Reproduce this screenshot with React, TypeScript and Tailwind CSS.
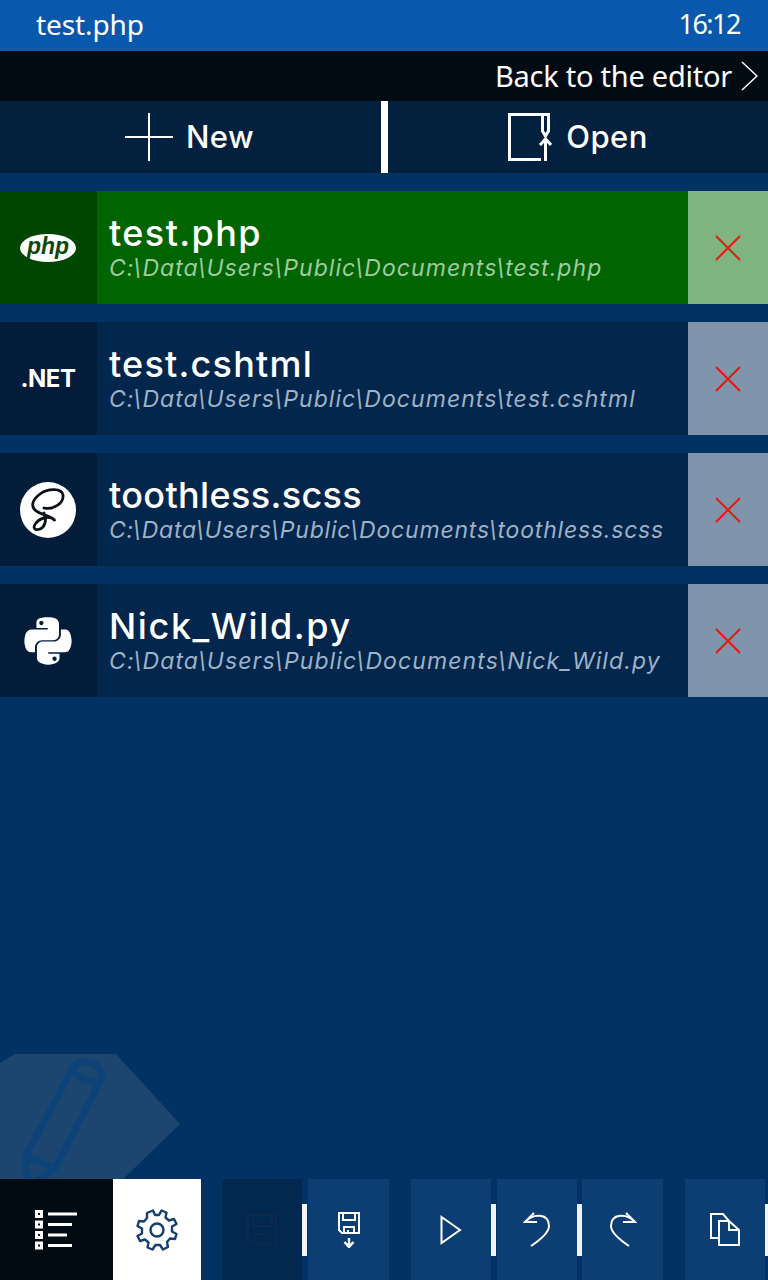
import React from "react";
import { FaPython } from "react-icons/fa";

const X = () => (
  <svg width="28" height="28" viewBox="0 0 28 28" fill="none" stroke="#e8170f" strokeWidth="2">
    <path d="M2 2 L26 26 M26 2 L2 26" />
  </svg>
);

const Php = () => (
  <svg width="56" height="30" viewBox="0 0 56 30">
    <ellipse cx="28" cy="15" rx="28" ry="14" fill="#fff" />
    <text x="28" y="21" textAnchor="middle" fontFamily="'Liberation Sans', sans-serif" fontStyle="italic" fontWeight="700" fontSize="23" textLength="42" lengthAdjust="spacingAndGlyphs" fill="#0c4708">php</text>
  </svg>
);

const Sass = () => (
  <div className="w-[56px] h-[56px] rounded-full bg-white flex items-center justify-center">
    <svg width="56" height="56" viewBox="0 0 56 56" fill="none" stroke="#0a0f18" strokeLinecap="round">
      <path d="M24 26 C32 28 44 22 43 13 C42 6 28 6 20 12 C12 18 11 24 15 28 C20 33 33 34 35 39 C32 34 22 34 16 41 C12 46 15 49 20 47 C25 45 27 38 24 31" strokeWidth="2.800" />
    </svg>
  </div>
);

type FileRow = { name: string; path: string; icon: React.ReactNode; track: string; pathTrack: string; active?: boolean };

const files: FileRow[] = [
  { name: "test.php", track: "tracking-[1.4px]", pathTrack: "tracking-[1.050px]", path: "C:\\Data\\Users\\Public\\Documents\\test.php", icon: <Php />, active: true },
  { name: "test.cshtml", track: "tracking-[1.2px]", pathTrack: "tracking-[1.050px]", path: "C:\\Data\\Users\\Public\\Documents\\test.cshtml", icon: <span className="text-white text-[24px] font-bold tracking-[-0.5px]">.NET</span> },
  { name: "toothless.scss", track: "tracking-[0.35px]", pathTrack: "tracking-[0.8px]", path: "C:\\Data\\Users\\Public\\Documents\\toothless.scss", icon: <Sass /> },
  { name: "Nick_Wild.py", track: "tracking-[1.6px]", pathTrack: "tracking-[1.100px]", path: "C:\\Data\\Users\\Public\\Documents\\Nick_Wild.py", icon: <FaPython className="text-white" size={54} /> },
];

const Sep = () => <div className="w-[5px] h-[52px] mt-[25px] bg-[#f1f4f8] shrink-0" />;

const Tool = ({ children, w = "w-[80px]", cls = "bg-[#0c3e73]" }: { children: React.ReactNode; w?: string; cls?: string }) => (
  <div className={`${w} ${cls} h-full shrink-0 flex items-center justify-center`}>{children}</div>
);

export default function App() {
  return (
    <div className="relative w-[768px] h-[1280px] overflow-hidden bg-[#023264] flex flex-col font-['Inter',sans-serif]">
      <div className="h-[51px] bg-[#0859ad] flex items-center justify-between pl-[36px] pr-[28px] pb-[3px] text-white font-normal font-['Noto_Sans',sans-serif] shrink-0">
        <span className="text-[28px] tracking-[-0.1px]">test.php</span>
        <span className="text-[27px] tracking-[-1.500px]">16:12</span>
      </div>
      <div className="h-[50px] bg-[#020a14] flex items-center justify-end pr-[10px] gap-[9px] text-white text-[29px] font-normal font-['Noto_Sans',sans-serif] shrink-0">
        <span className="tracking-[-0.25px]">Back to the editor</span>
        <svg width="17" height="30" viewBox="0 0 17 30" fill="none" stroke="#fff" strokeWidth="1.5"><path d="M1 1 L16 15 L1 29" /></svg>
      </div>
      <div className="h-[72px] bg-[#03203f] flex shrink-0 text-white text-[31px] font-medium">
        <div className="w-[381px] flex items-center justify-center gap-[13px] pr-[2px]">
          <svg width="48" height="48" viewBox="0 0 48 48" stroke="#fff" strokeWidth="2"><path d="M0 24 H48 M24 0 V48" /></svg>
          <span className="tracking-[0.4px]">New</span>
        </div>
        <div className="w-[7px] bg-white" />
        <div className="flex-1 flex items-center justify-center gap-[14px]">
          <svg width="44" height="48" viewBox="0 0 44 48" fill="none" stroke="#fff" strokeWidth="3">
            <path d="M33 46.500 H1.500 V1.500 H40.500 V18 L37.500 23 L34.500 18 V2" />
            <path d="M37.500 48 V27 M32 32 L37.500 26 L43 32" />
          </svg>
          <span className="tracking-[0.4px]">Open</span>
        </div>
      </div>
      <div className="flex-1 flex flex-col gap-[18px] pt-[18px] relative z-10">
        {files.map((f) => (
          <div key={f.name} className={`h-[113px] flex ${f.active ? "bg-[#006400]" : "bg-[#03264d]"}`}>
            <div className={`w-[97px] pr-px flex items-center justify-center shrink-0 ${f.active ? "bg-[#004500]" : "bg-[#031c3a]"}`}>{f.icon}</div>
            <div className="flex-1 pl-[12px] pt-[20px] min-w-0">
              <div className={`text-white text-[36px] leading-[45px] font-medium whitespace-nowrap ${f.track}`}>{f.name}</div>
              <div className={`text-[23px] leading-[24px] italic whitespace-nowrap ${f.pathTrack} ${f.active ? "text-[#9fcb9f]" : "text-[#9fb2c6]"}`}>{f.path}</div>
            </div>
            <div className={`w-[80px] flex items-center justify-center shrink-0 ${f.active ? "bg-[#80b480]" : "bg-[#8095ab]"}`}><X /></div>
          </div>
        ))}
      </div>
      <svg className="absolute left-0 top-[1050px]" width="184" height="130" viewBox="0 0 184 130">
        <path d="M0 13 L15 4 H116 L180 74 L122 130 H0 Z" fill="#1c4670" />
        <g fill="none" stroke="#0d4379" strokeWidth="7">
          <path d="M72 20 C78 6 102 10 102 28 L55 118 L30 136 C26 124 25 114 25 107 Z" />
          <path d="M72 20 C80 30 92 34 102 30" />
          <path d="M25 107 C34 110 46 114 55 118" />
        </g>
      </svg>
      <div className="h-[101px] flex shrink-0 relative z-10">
        <Tool w="w-[113px]" cls="bg-[#020a14]">
          <svg width="44" height="40" viewBox="0 0 44 40" fill="#fff">
            <path fillRule="evenodd" d="M0 0 H8 V8 H0 Z M3 3 V5 H5 V3 Z M0 10.500 H8 V18.500 H0 Z M3 13.500 V15.500 H5 V13.500 Z M0 21 H8 V29 H0 Z M3 24 V26 H5 V24 Z M0 31.500 H8 V39.500 H0 Z M3 34.500 V36.500 H5 V34.500 Z" />
            <path d="M13 2.500 H42 V5.500 H13 Z M13 13 H37 V16 H13 Z M13 23.500 H32 V26.500 H13 Z M13 34 H37 V37 H13 Z" />
          </svg>
        </Tool>
        <Tool w="w-[88px]" cls="bg-white">
          <svg width="42" height="42" viewBox="0 0 42 42" fill="none" stroke="#143f6e" strokeWidth="2.400" strokeLinejoin="round">
            <circle cx="21" cy="21" r="6.500" />
            <path d="M17 1.500 L19 6 H23 L25.500 1.500 L30.500 3.500 L29.500 8.500 L33 11.500 L38 10 L40.500 15 L36 17.500 V22.500 L40.500 25 L39 30 L34 29.500 L31 33 L32 38 L27 40.500 L24 36 H19.500 L16.500 40.500 L11.500 38.500 L12.500 33.500 L9 30.500 L4 32 L1.500 27 L6 24.500 V19.500 L1.500 17 L3 12 L8 12.500 L11 9 L11 4 Z" />
          </svg>
        </Tool>
        <div className="w-[21px] shrink-0" />
        <Tool cls="bg-[#03284f]">
          <svg width="30" height="31" viewBox="0 0 30 31" fill="none" stroke="#0b2a4d" strokeWidth="2">
            <path d="M1 1 H29 V30 H5 L1 26 Z M6 1 V12 H25 V1 M8 30 V20 H23 V30 M14 24 V30" />
          </svg>
        </Tool>
        <Sep />
        <div className="w-px shrink-0" />
        <Tool w="w-[81px]">
          <svg width="24" height="36" viewBox="0 0 24 36" fill="none" stroke="#fff" strokeWidth="2">
            <path d="M2 1 H22 V21 H5 L2 18 Z M6 1 V8 H18 V1 M7 21 V15 H17 V21 M11 18 V21" />
            <path d="M12 26 V35 M7.500 30 L12 35 L16.500 30" strokeWidth="2.400" />
          </svg>
        </Tool>
        <div className="w-[22px] shrink-0" />
        <Tool>
          <svg width="22" height="30" viewBox="0 0 22 30" fill="none" stroke="#fff" strokeWidth="2"><path d="M1.500 2 L20 15 L1.500 28 Z" /></svg>
        </Tool>
        <Sep />
        <div className="w-px shrink-0" />
        <Tool>
          <svg width="28" height="36" viewBox="0 0 28 36" fill="none" stroke="#fff" strokeWidth="2"><path d="M11 1 L2 10 H14 M2.500 10 C10 1 26 1 26 14 C26 20 20 26 8 34" /></svg>
        </Tool>
        <Sep />
        <Tool w="w-[81px]">
          <svg width="28" height="36" viewBox="0 0 28 36" fill="none" stroke="#fff" strokeWidth="2"><path d="M17 1 L26 10 H14 M25.500 10 C18 1 2 1 2 14 C2 20 8 26 20 34" /></svg>
        </Tool>
        <div className="w-[22px] shrink-0" />
        <Tool>
          <svg width="30" height="33" viewBox="0 0 30 33" fill="none" stroke="#fff" strokeWidth="2">
            <path d="M9 25 H1 V1 H13 L19 8" />
            <path d="M9 8 H19 L29 17 V32 H9 Z M19 8 V17 H29" />
          </svg>
        </Tool>
        <Sep />
      </div>
    </div>
  );
}
